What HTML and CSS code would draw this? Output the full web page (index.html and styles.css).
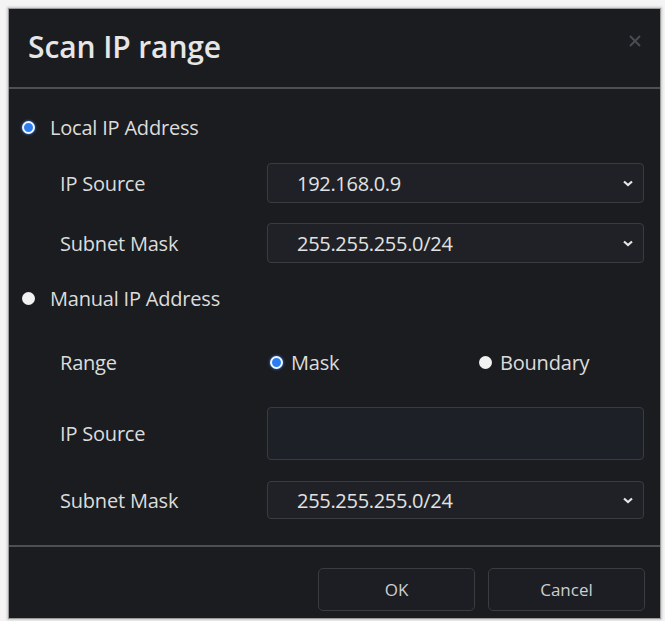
FILE: index.html
```html
<!DOCTYPE html>
<html>
<head>
<meta charset="utf-8">
<link rel="stylesheet" href="styles.css">
</head>
<body>
<div class="dialog">
  <div class="header">
    <h1 class="title">Scan IP range</h1>
    <button class="close" aria-label="Close">
      <svg width="14" height="14" viewBox="0 0 14 14"><path d="M2 2 L12 12 M12 2 L2 12" stroke="#4a4c52" stroke-width="2" fill="none"/></svg>
    </button>
  </div>
  <div class="divider"></div>
  <div class="body">
    <div class="option first">
      <span class="radio on"></span><span class="opt-label">Local IP Address</span>
    </div>
    <div class="field f1">
      <span class="label">IP Source</span>
      <div class="select">
        <span class="value">192.168.0.9</span>
        <svg class="chev" width="10" height="7" viewBox="0 0 10 7"><path d="M1 1.5 L5 5 L9 1.5" stroke="#e6e6e6" stroke-width="2.2" fill="none"/></svg>
      </div>
    </div>
    <div class="field f2">
      <span class="label">Subnet Mask</span>
      <div class="select">
        <span class="value">255.255.255.0/24</span>
        <svg class="chev" width="10" height="7" viewBox="0 0 10 7"><path d="M1 1.5 L5 5 L9 1.5" stroke="#e6e6e6" stroke-width="2.2" fill="none"/></svg>
      </div>
    </div>
    <div class="option second">
      <span class="radio"></span><span class="opt-label">Manual IP Address</span>
    </div>
    <div class="field range">
      <span class="label">Range</span>
      <div class="choices">
        <div class="choice"><span class="radio on"></span><span class="opt-label">Mask</span></div>
        <div class="choice"><span class="radio"></span><span class="opt-label">Boundary</span></div>
      </div>
    </div>
    <div class="field f3">
      <span class="label">IP Source</span>
      <div class="input"></div>
    </div>
    <div class="field f4">
      <span class="label">Subnet Mask</span>
      <div class="select">
        <span class="value">255.255.255.0/24</span>
        <svg class="chev" width="10" height="7" viewBox="0 0 10 7"><path d="M1 1.5 L5 5 L9 1.5" stroke="#e6e6e6" stroke-width="2.2" fill="none"/></svg>
      </div>
    </div>
  </div>
  <div class="divider"></div>
  <div class="footer">
    <button class="btn">OK</button>
    <button class="btn">Cancel</button>
  </div>
</div>
</body>
</html>
```

FILE: styles.css
```css
* { box-sizing: border-box; }
html, body { margin: 0; padding: 0; }
body {
  background: #f4f4f4;
  width: 665px;
  height: 621px;
  overflow: hidden;
  font-family: "Open Sans", "Noto Sans", sans-serif;
  color: #dedede;
}
.dialog {
  margin: 9px 0 0 9px;
  width: 651px;
  height: 609px;
  background: #1b1c20;
  box-shadow: 0 0 0 1px #9a9a9a, 0 0 2px 2px #c8c8c8;
  display: flex;
  flex-direction: column;
}
.header {
  height: 78px;
  flex: none;
  display: flex;
  align-items: center;
  justify-content: space-between;
  padding: 0 18px 4px 19px;
}
.title {
  margin: 0;
  font-size: 30px;
  font-weight: 600;
  color: #e6e6e6;
  letter-spacing: -0.1px;
}
.close {
  background: none;
  border: none;
  padding: 0;
  width: 14px;
  height: 14px;
  display: flex;
  margin-top: -10px;
}
.divider {
  height: 2px;
  background: #4d4f54;
  flex: none;
}
.body {
  flex: 1;
  display: flex;
  flex-direction: column;
  padding-top: 21px;
}
.option {
  height: 34px;
  display: flex;
  align-items: center;
  padding-left: 13px;
}
.option .opt-label { margin-left: 15px; }
.second { margin-top: 18px; }
.radio {
  width: 13px;
  height: 13px;
  border-radius: 50%;
  background: #f2f2f2;
  flex: none;
}
.radio.on {
  background: #2a7ef2;
  border: 2.5px solid #f0f4ff;
  box-shadow: 0 0 3px #3d86f5;
}
.opt-label {
  font-size: 20px;
  color: #dcdcdc;
  letter-spacing: -0.2px;
}
.field {
  display: flex;
  align-items: center;
  padding-left: 51px;
  padding-right: 16px;
}
.label {
  width: 207px;
  font-size: 20px;
  color: #dcdcdc;
  flex: none;
  letter-spacing: -0.2px;
}
.f1 { margin-top: 19px; }
.f2 { margin-top: 20px; }
.range { margin-top: 30px; height: 34px; }
.f3 { margin-top: 28px; }
.f4 { margin-top: 21px; }
.select, .input {
  flex: 1;
  height: 40px;
  border: 1px solid #393b41;
  border-radius: 4px;
  background: #1f2126;
  display: flex;
  align-items: center;
  justify-content: space-between;
  padding: 0 10px 0 29px;
}
.f4 .select { height: 38px; }
.input {
  height: 53px;
  background: #1e2027;
}
.value {
  font-size: 20px;
  color: #e2e2e2;
  letter-spacing: -0.3px;
}
.choices {
  flex: 1;
  display: grid;
  grid-template-columns: 209px 1fr;
}
.choice {
  display: flex;
  align-items: center;
  padding-left: 3px;
}
.choice .opt-label { margin-left: 8px; }
.footer {
  height: 71px;
  flex: none;
  display: flex;
  justify-content: flex-end;
  align-items: flex-start;
  gap: 13px;
  padding: 21px 15px 0 0;
}
.btn {
  width: 157px;
  height: 43px;
  background: #1c1e23;
  border: 1px solid #3a3c42;
  border-radius: 5px;
  color: #cfcfcf;
  font-family: "Open Sans", "Noto Sans", sans-serif;
  font-size: 17px;
}
```
